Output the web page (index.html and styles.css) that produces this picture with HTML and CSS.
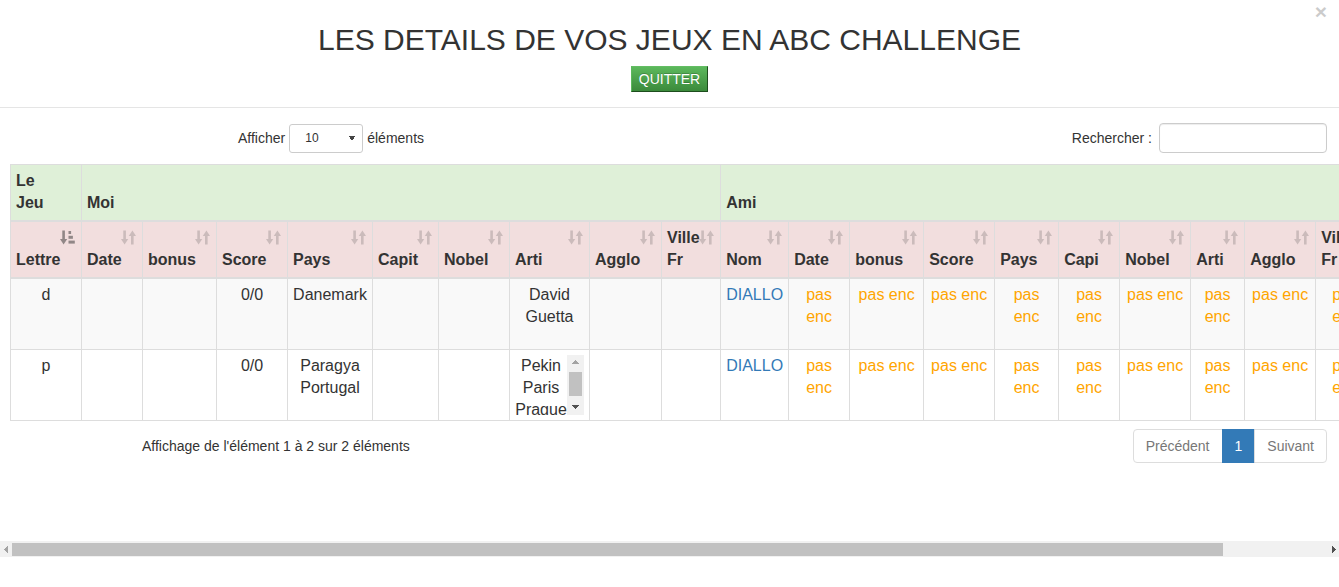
FILE: index.html
```html
<!DOCTYPE html>
<html lang="fr">
<head>
<meta charset="utf-8">
<title>Les détails de vos jeux en ABC Challenge</title>
<link rel="stylesheet" href="styles.css">
</head>
<body>
<svg class="defs" aria-hidden="true">
  <symbol id="i-sort" viewBox="0 0 15 15">
    <rect x="2.3" y="0.5" width="2.6" height="9.5"/>
    <path d="M0 9h7.2l-3.6 5.6z"/>
    <rect x="10" y="5" width="2.6" height="9.5"/>
    <path d="M7.8 6h7.2l-3.6-5.6z"/>
  </symbol>
  <symbol id="i-sort-attr" viewBox="0 0 15 15">
    <rect x="2.3" y="0.5" width="2.6" height="9.5"/>
    <path d="M0 9h7.2l-3.6 5.6z"/>
    <rect x="8.5" y="1" width="2.6" height="3"/>
    <rect x="8.5" y="5.8" width="4.4" height="3"/>
    <rect x="8.5" y="10.6" width="6.3" height="3"/>
  </symbol>
</svg>
<div class="modal">
  <header class="modal-header">
    <button class="close" type="button" aria-label="Fermer">&times;</button>
    <h1 class="modal-title">LES DETAILS DE VOS JEUX EN ABC CHALLENGE</h1>
    <button class="btn-quit" type="button">QUITTER</button>
  </header>
  <div class="modal-body">
    <div class="toolbar">
      <label class="length">Afficher <select class="select"><option>10</option><option>25</option><option>50</option><option>100</option></select> éléments</label>
      <label class="search">Rechercher :<input type="search" class="search-input"></label>
    </div>
    <table class="grid">
      <colgroup>
        <col><col><col><col><col><col><col><col><col><col>
        <col><col><col><col><col><col><col><col><col><col>
      </colgroup>
      <thead>
        <tr class="group-row">
          <th>Le Jeu</th>
          <th colspan="9">Moi</th>
          <th colspan="10">Ami</th>
        </tr>
        <tr class="sort-row">
          <th class="sorted"><svg class="sort"><use href="#i-sort-attr"/></svg>Lettre</th>
          <th><svg class="sort"><use href="#i-sort"/></svg>Date</th>
          <th><svg class="sort"><use href="#i-sort"/></svg>bonus</th>
          <th><svg class="sort"><use href="#i-sort"/></svg>Score</th>
          <th><svg class="sort"><use href="#i-sort"/></svg>Pays</th>
          <th><svg class="sort"><use href="#i-sort"/></svg>Capit</th>
          <th><svg class="sort"><use href="#i-sort"/></svg>Nobel</th>
          <th><svg class="sort"><use href="#i-sort"/></svg>Arti</th>
          <th><svg class="sort"><use href="#i-sort"/></svg>Agglo</th>
          <th><svg class="sort"><use href="#i-sort"/></svg>Ville Fr</th>
          <th><svg class="sort"><use href="#i-sort"/></svg>Nom</th>
          <th><svg class="sort"><use href="#i-sort"/></svg>Date</th>
          <th><svg class="sort"><use href="#i-sort"/></svg>bonus</th>
          <th><svg class="sort"><use href="#i-sort"/></svg>Score</th>
          <th><svg class="sort"><use href="#i-sort"/></svg>Pays</th>
          <th><svg class="sort"><use href="#i-sort"/></svg>Capi</th>
          <th><svg class="sort"><use href="#i-sort"/></svg>Nobel</th>
          <th><svg class="sort"><use href="#i-sort"/></svg>Arti</th>
          <th><svg class="sort"><use href="#i-sort"/></svg>Agglo</th>
          <th><svg class="sort"><use href="#i-sort"/></svg>Ville Fr</th>
        </tr>
      </thead>
      <tbody>
        <tr>
          <td>d</td><td></td><td></td><td>0/0</td><td>Danemark</td><td></td><td></td><td>David Guetta</td><td></td><td></td>
          <td class="name">DIALLO</td>
          <td class="pending">pas enc</td><td class="pending">pas enc</td><td class="pending">pas enc</td><td class="pending">pas enc</td>
          <td class="pending">pas enc</td><td class="pending">pas enc</td><td class="pending">pas enc</td><td class="pending">pas enc</td><td class="pending">pas enc</td>
        </tr>
        <tr>
          <td>p</td><td></td><td></td><td>0/0</td><td>Paragya Portugal</td><td></td><td></td>
          <td>
            <div class="city-list">
              <div class="city-items"><div>Pekin</div><div>Paris</div><div>Prague</div></div>
              <div class="vscroll" aria-hidden="true">
                <span class="vs-btn vs-up"></span>
                <span class="vs-track"><span class="vs-thumb"></span></span>
                <span class="vs-btn vs-down"></span>
              </div>
            </div>
          </td>
          <td></td><td></td>
          <td class="name">DIALLO</td>
          <td class="pending">pas enc</td><td class="pending">pas enc</td><td class="pending">pas enc</td><td class="pending">pas enc</td>
          <td class="pending">pas enc</td><td class="pending">pas enc</td><td class="pending">pas enc</td><td class="pending">pas enc</td><td class="pending">pas enc</td>
        </tr>
      </tbody>
    </table>
    <div class="footer-row">
      <div class="info">Affichage de l'élément 1 à 2 sur 2 éléments</div>
      <ul class="pagination">
        <li class="disabled"><a href="#">Précédent</a></li>
        <li class="active"><a href="#">1</a></li>
        <li class="disabled"><a href="#">Suivant</a></li>
      </ul>
    </div>
  </div>
  <div class="hscroll" aria-hidden="true">
    <span class="hs-btn hs-left"></span>
    <span class="hs-track"><span class="hs-thumb"></span></span>
    <span class="hs-btn hs-right"></span>
  </div>
</div>
</body>
</html>
```
FILE: styles.css
```css
* { box-sizing: border-box; }
html, body { margin: 0; background: #fff; }
body {
  font-family: "Liberation Sans", Arial, Helvetica, sans-serif;
  color: #333;
  font-size: 14px;
  line-height: 20px;
}
.defs { display: none; }

.modal { width: 100%; }

.modal-header {
  position: relative;
  display: flex;
  flex-direction: column;
  align-items: center;
  padding: 15px;
  border-bottom: 1px solid #e5e5e5;
}
.close {
  position: absolute;
  top: 1px;
  right: 12px;
  padding: 0;
  border: 0;
  background: none;
  font: bold 21px/21px "Liberation Sans", Arial, sans-serif;
  color: #000;
  opacity: .2;
  cursor: pointer;
}
.modal-title {
  margin: 8px 0 10px;
  font-size: 30px;
  line-height: 33px;
  font-weight: normal;
  color: #333;
}
.btn-quit {
  font: 14px/20px "Liberation Sans", Arial, sans-serif;
  color: #fff;
  padding: 2px 7px;
  border: 1px solid;
  border-color: #63bd63 #1d4d1d #1d4d1d #5cb85c;
  background: linear-gradient(#5cb85c, #3b8a3b);
  text-shadow: 0 -1px 0 rgba(0,0,0,.2);
}

.modal-body {
  height: 433px;
  padding: 15px 12px 0 10px;
  overflow: hidden;
}

/* horizontal scrollbar of the modal body */
.hscroll {
  display: flex;
  height: 16px;
  background: #f1f1f1;
}
.hs-btn {
  width: 11px;
  background-repeat: no-repeat;
  background-position: center;
  background-size: 4px 7px;
}
.hs-left {
  background-image: conic-gradient(from 48.8deg at 0 50%, #a3a3a3 0 82.4deg, transparent 0);
}
.hs-right {
  background-image: conic-gradient(from 228.8deg at 100% 50%, #505050 0 82.4deg, transparent 0);
}
.hs-track {
  flex: 1;
  padding: 2px 1px 1px;
}
.hs-thumb {
  display: block;
  width: 1211px;
  height: 100%;
  background: #c1c1c1;
}

.toolbar {
  display: flex;
  align-items: center;
  height: 30px;
}
.length {
  display: flex;
  align-items: center;
  gap: 4px;
  margin-left: 228px;
}
.select {
  -webkit-appearance: none;
  appearance: none;
  width: 74px;
  height: 29px;
  padding: 0 15px;
  border: 1px solid #ccc;
  border-radius: 3px;
  font: 12px "Liberation Sans", Arial, sans-serif;
  color: #333;
  background: conic-gradient(from -32deg at 50% 100%, #444 0 64deg, transparent 0) right 7px center / 6px 5px no-repeat #fff;
}
.search {
  margin-left: auto;
  display: flex;
  align-items: center;
  gap: 7px;
}
.search-input {
  width: 168px;
  height: 30px;
  padding: 5px 10px;
  border: 1px solid #ccc;
  border-radius: 4px;
  box-shadow: inset 0 1px 1px rgba(0,0,0,.075);
  font: 14px "Liberation Sans", Arial, sans-serif;
}

.grid {
  margin-top: 11px;
  border-collapse: collapse;
  table-layout: fixed;
  width: 1364px;
  font-size: 16px;
  line-height: 22px;
}
.grid col:nth-child(1) { width: 71px; }
.grid col:nth-child(2) { width: 61px; }
.grid col:nth-child(3) { width: 74px; }
.grid col:nth-child(4) { width: 71px; }
.grid col:nth-child(5) { width: 85px; }
.grid col:nth-child(6) { width: 66px; }
.grid col:nth-child(7) { width: 71px; }
.grid col:nth-child(8) { width: 80px; }
.grid col:nth-child(9) { width: 72px; }
.grid col:nth-child(10) { width: 59px; }
.grid col:nth-child(11) { width: 68px; }
.grid col:nth-child(12) { width: 61px; }
.grid col:nth-child(13) { width: 74px; }
.grid col:nth-child(14) { width: 71px; }
.grid col:nth-child(15) { width: 64px; }
.grid col:nth-child(16) { width: 61px; }
.grid col:nth-child(17) { width: 71px; }
.grid col:nth-child(18) { width: 54px; }
.grid col:nth-child(19) { width: 71px; }
.grid col:nth-child(20) { width: 59px; }

.grid th, .grid td {
  border: 1px solid #ddd;
  padding: 5px;
}
.grid th {
  position: relative;
  padding: 5px 30px 6px 5px;
  text-align: left;
  vertical-align: bottom;
  font-weight: bold;
  border-bottom-width: 2px;
}
.group-row th { background: #dff0d8; }
.sort-row th { background: #f2dede; }
.sort {
  position: absolute;
  top: 8px;
  right: 6px;
  width: 15px;
  height: 15px;
  fill: #333;
  opacity: .2;
}
.sorted .sort { opacity: .5; }

.grid td {
  height: 71px;
  text-align: center;
  vertical-align: top;
}
.grid tbody tr:nth-child(odd) td { background: #f9f9f9; }
.grid .name { color: #337ab7; }
.grid .pending { color: #ffa500; }

/* list box with its own scrollbar */
.city-list {
  display: flex;
  height: 60px;
}
.city-items {
  flex: 1;
  overflow: hidden;
}
.vscroll {
  display: flex;
  flex-direction: column;
  width: 17px;
  background: #f1f1f1;
}
.vs-btn {
  height: 15px;
  background-repeat: no-repeat;
  background-position: center;
  background-size: 7px 4px;
}
.vs-up {
  background-image: conic-gradient(from 138.8deg at 50% 0, #a3a3a3 0 82.4deg, transparent 0);
}
.vs-down {
  background-image: conic-gradient(from -41.2deg at 50% 100%, #505050 0 82.4deg, transparent 0);
}
.vs-track {
  flex: 1;
  padding: 2px;
}
.vs-thumb {
  display: block;
  height: 24px;
  background: #c1c1c1;
}

.footer-row {
  display: flex;
  align-items: center;
  margin-top: 8px;
}
.info { margin-left: 132px; }
.pagination {
  display: flex;
  margin: 0 0 0 auto;
  padding: 0;
  list-style: none;
}
.pagination a {
  display: block;
  padding: 6px 12px;
  line-height: 20px;
  border: 1px solid #ddd;
  margin-left: -1px;
  color: #777;
  text-decoration: none;
  background: #fff;
}
.pagination li:first-child a { margin-left: 0; border-radius: 4px 0 0 4px; }
.pagination li:last-child a { border-radius: 0 4px 4px 0; }
.pagination .active a {
  background: #337ab7;
  border-color: #337ab7;
  color: #fff;
}
```
